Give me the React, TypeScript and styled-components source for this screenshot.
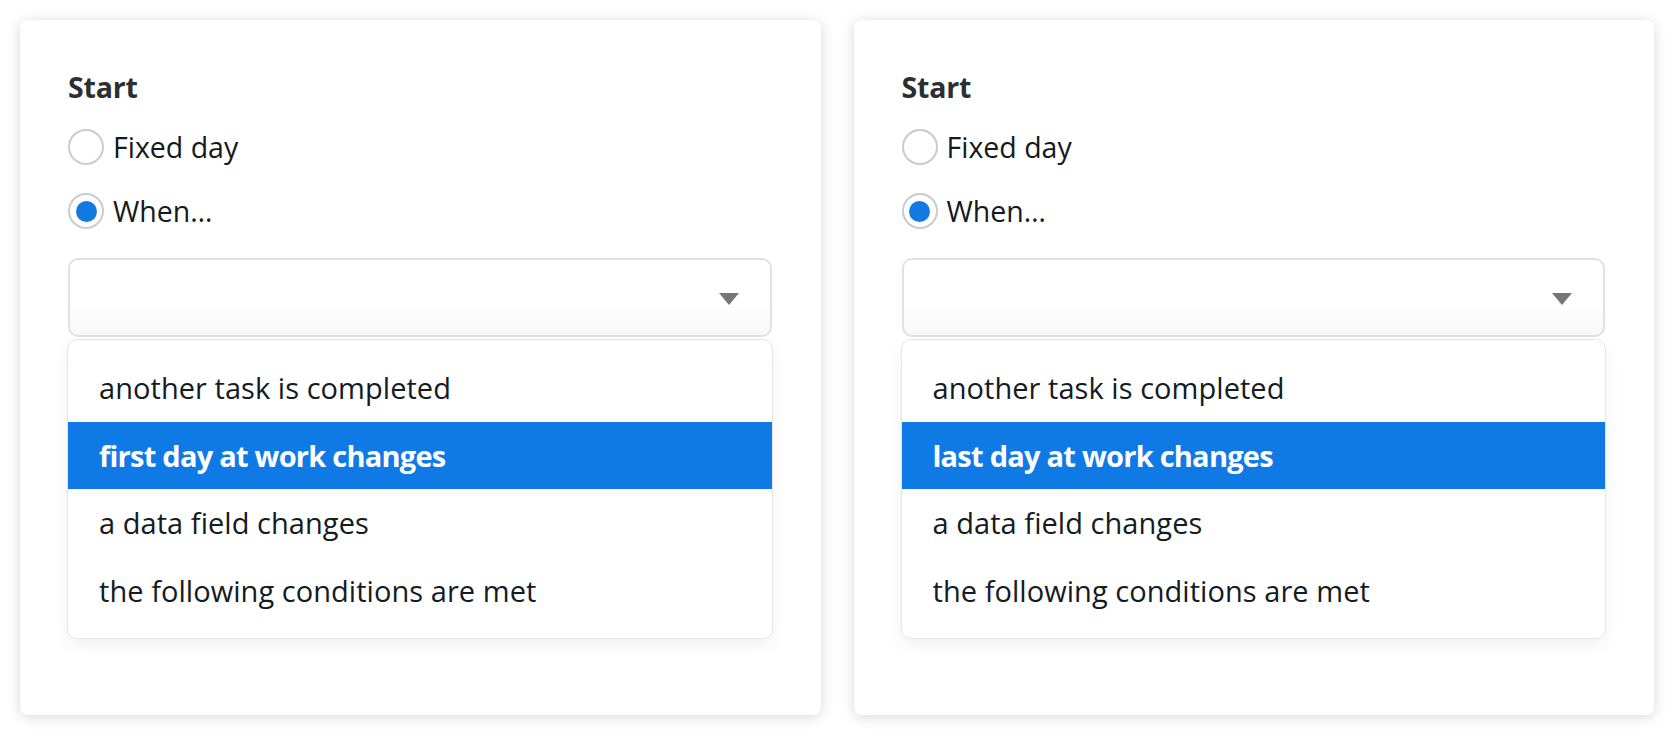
import React, { useState } from 'react';
import styled, { createGlobalStyle } from 'styled-components';

const GlobalStyle = createGlobalStyle`
  html, body {
    margin: 0;
    padding: 0;
    background: #ffffff;
  }
  body {
    font-family: 'Open Sans', 'Noto Sans', sans-serif;
    -webkit-font-smoothing: antialiased;
  }
`;

const Page = styled.div`
  display: flex;
  gap: 33px;
  padding: 20px;
`;

const Card = styled.section`
  flex: 1;
  background: #ffffff;
  border-radius: 8px;
  box-shadow: 0 2px 14px rgba(0, 0, 0, 0.16);
  padding: 48px 49px 76px 48px;
  display: flex;
  flex-direction: column;
`;

const Label = styled.div`
  font-size: 28.5px;
  font-weight: 700;
  color: #2b2f33;
  letter-spacing: -0.2px;
  line-height: normal;
`;

const RadioGroup = styled.div`
  display: flex;
  flex-direction: column;
  gap: 24px;
  margin-top: 21px;
`;

const RadioRow = styled.label`
  display: flex;
  align-items: center;
  gap: 9px;
  height: 40px;
  font-size: 28.5px;
  color: #15191d;
  cursor: pointer;
`;

const RadioCircle = styled.span<{ $checked: boolean }>`
  box-sizing: border-box;
  width: 36px;
  height: 36px;
  border-radius: 50%;
  border: 2px solid #c8ccd1;
  background: #ffffff;
  display: flex;
  align-items: center;
  justify-content: center;
  flex-shrink: 0;

  &::after {
    content: '';
    width: 21px;
    height: 21px;
    border-radius: 50%;
    background: #1379e2;
    display: ${props => (props.$checked ? 'block' : 'none')};
  }
`;

const Select = styled.div`
  box-sizing: border-box;
  margin-top: 27px;
  height: 79px;
  border: 2px solid #dfe2e5;
  border-radius: 10px;
  background: linear-gradient(180deg, #ffffff 60%, #f8f8f8 100%);
  display: flex;
  align-items: center;
  justify-content: flex-end;
  padding-right: 31px;
`;

const Arrow = styled.svg`
  width: 20px;
  height: 12px;
  margin-top: 3px;
`;

const Menu = styled.ul`
  box-sizing: border-box;
  list-style: none;
  margin: 2px -1px 0 -1px;
  padding: 14px 0;
  border: 1px solid #e4e6e9;
  border-radius: 10px;
  background: #ffffff;
  box-shadow: 0 6px 16px rgba(0, 0, 0, 0.06);
`;

const Option = styled.li<{ $active: boolean }>`
  height: 67.5px;
  line-height: 67.5px;
  padding-left: 31px;
  font-size: 29px;
  font-weight: ${props => (props.$active ? 700 : 400)};
  letter-spacing: ${props => (props.$active ? '-0.75px' : '0.05px')};
  color: ${props => (props.$active ? '#ffffff' : '#141b22')};
  background: ${props => (props.$active ? '#0f7ae5' : 'transparent')};
  white-space: nowrap;
  cursor: pointer;
`;

type Panel = {
  id: number;
  options: string[];
  active: number;
};

const panels: Panel[] = [
  {
    id: 1,
    options: [
      'another task is completed',
      'first day at work changes',
      'a data field changes',
      'the following conditions are met',
    ],
    active: 1,
  },
  {
    id: 2,
    options: [
      'another task is completed',
      'last day at work changes',
      'a data field changes',
      'the following conditions are met',
    ],
    active: 1,
  },
];

const StartPanel: React.FC<{ panel: Panel }> = ({ panel }) => {
  const [mode, setMode] = useState<'fixed' | 'when'>('when');

  return (
    <Card>
      <Label>Start</Label>
      <RadioGroup>
        <RadioRow onClick={() => setMode('fixed')}>
          <RadioCircle $checked={mode === 'fixed'} />
          Fixed day
        </RadioRow>
        <RadioRow onClick={() => setMode('when')}>
          <RadioCircle $checked={mode === 'when'} />
          When…
        </RadioRow>
      </RadioGroup>
      <Select>
        <Arrow viewBox="0 0 20 12">
          <path d="M0 0 H20 L10 12 Z" fill="#767676" />
        </Arrow>
      </Select>
      <Menu>
        {panel.options.map((option, i) => (
          <Option key={option} $active={i === panel.active}>
            {option}
          </Option>
        ))}
      </Menu>
    </Card>
  );
};

const App: React.FC = () => {
  return (
    <>
      <GlobalStyle />
      <Page>
        {panels.map(panel => (
          <StartPanel key={panel.id} panel={panel} />
        ))}
      </Page>
    </>
  );
};

export default App;
